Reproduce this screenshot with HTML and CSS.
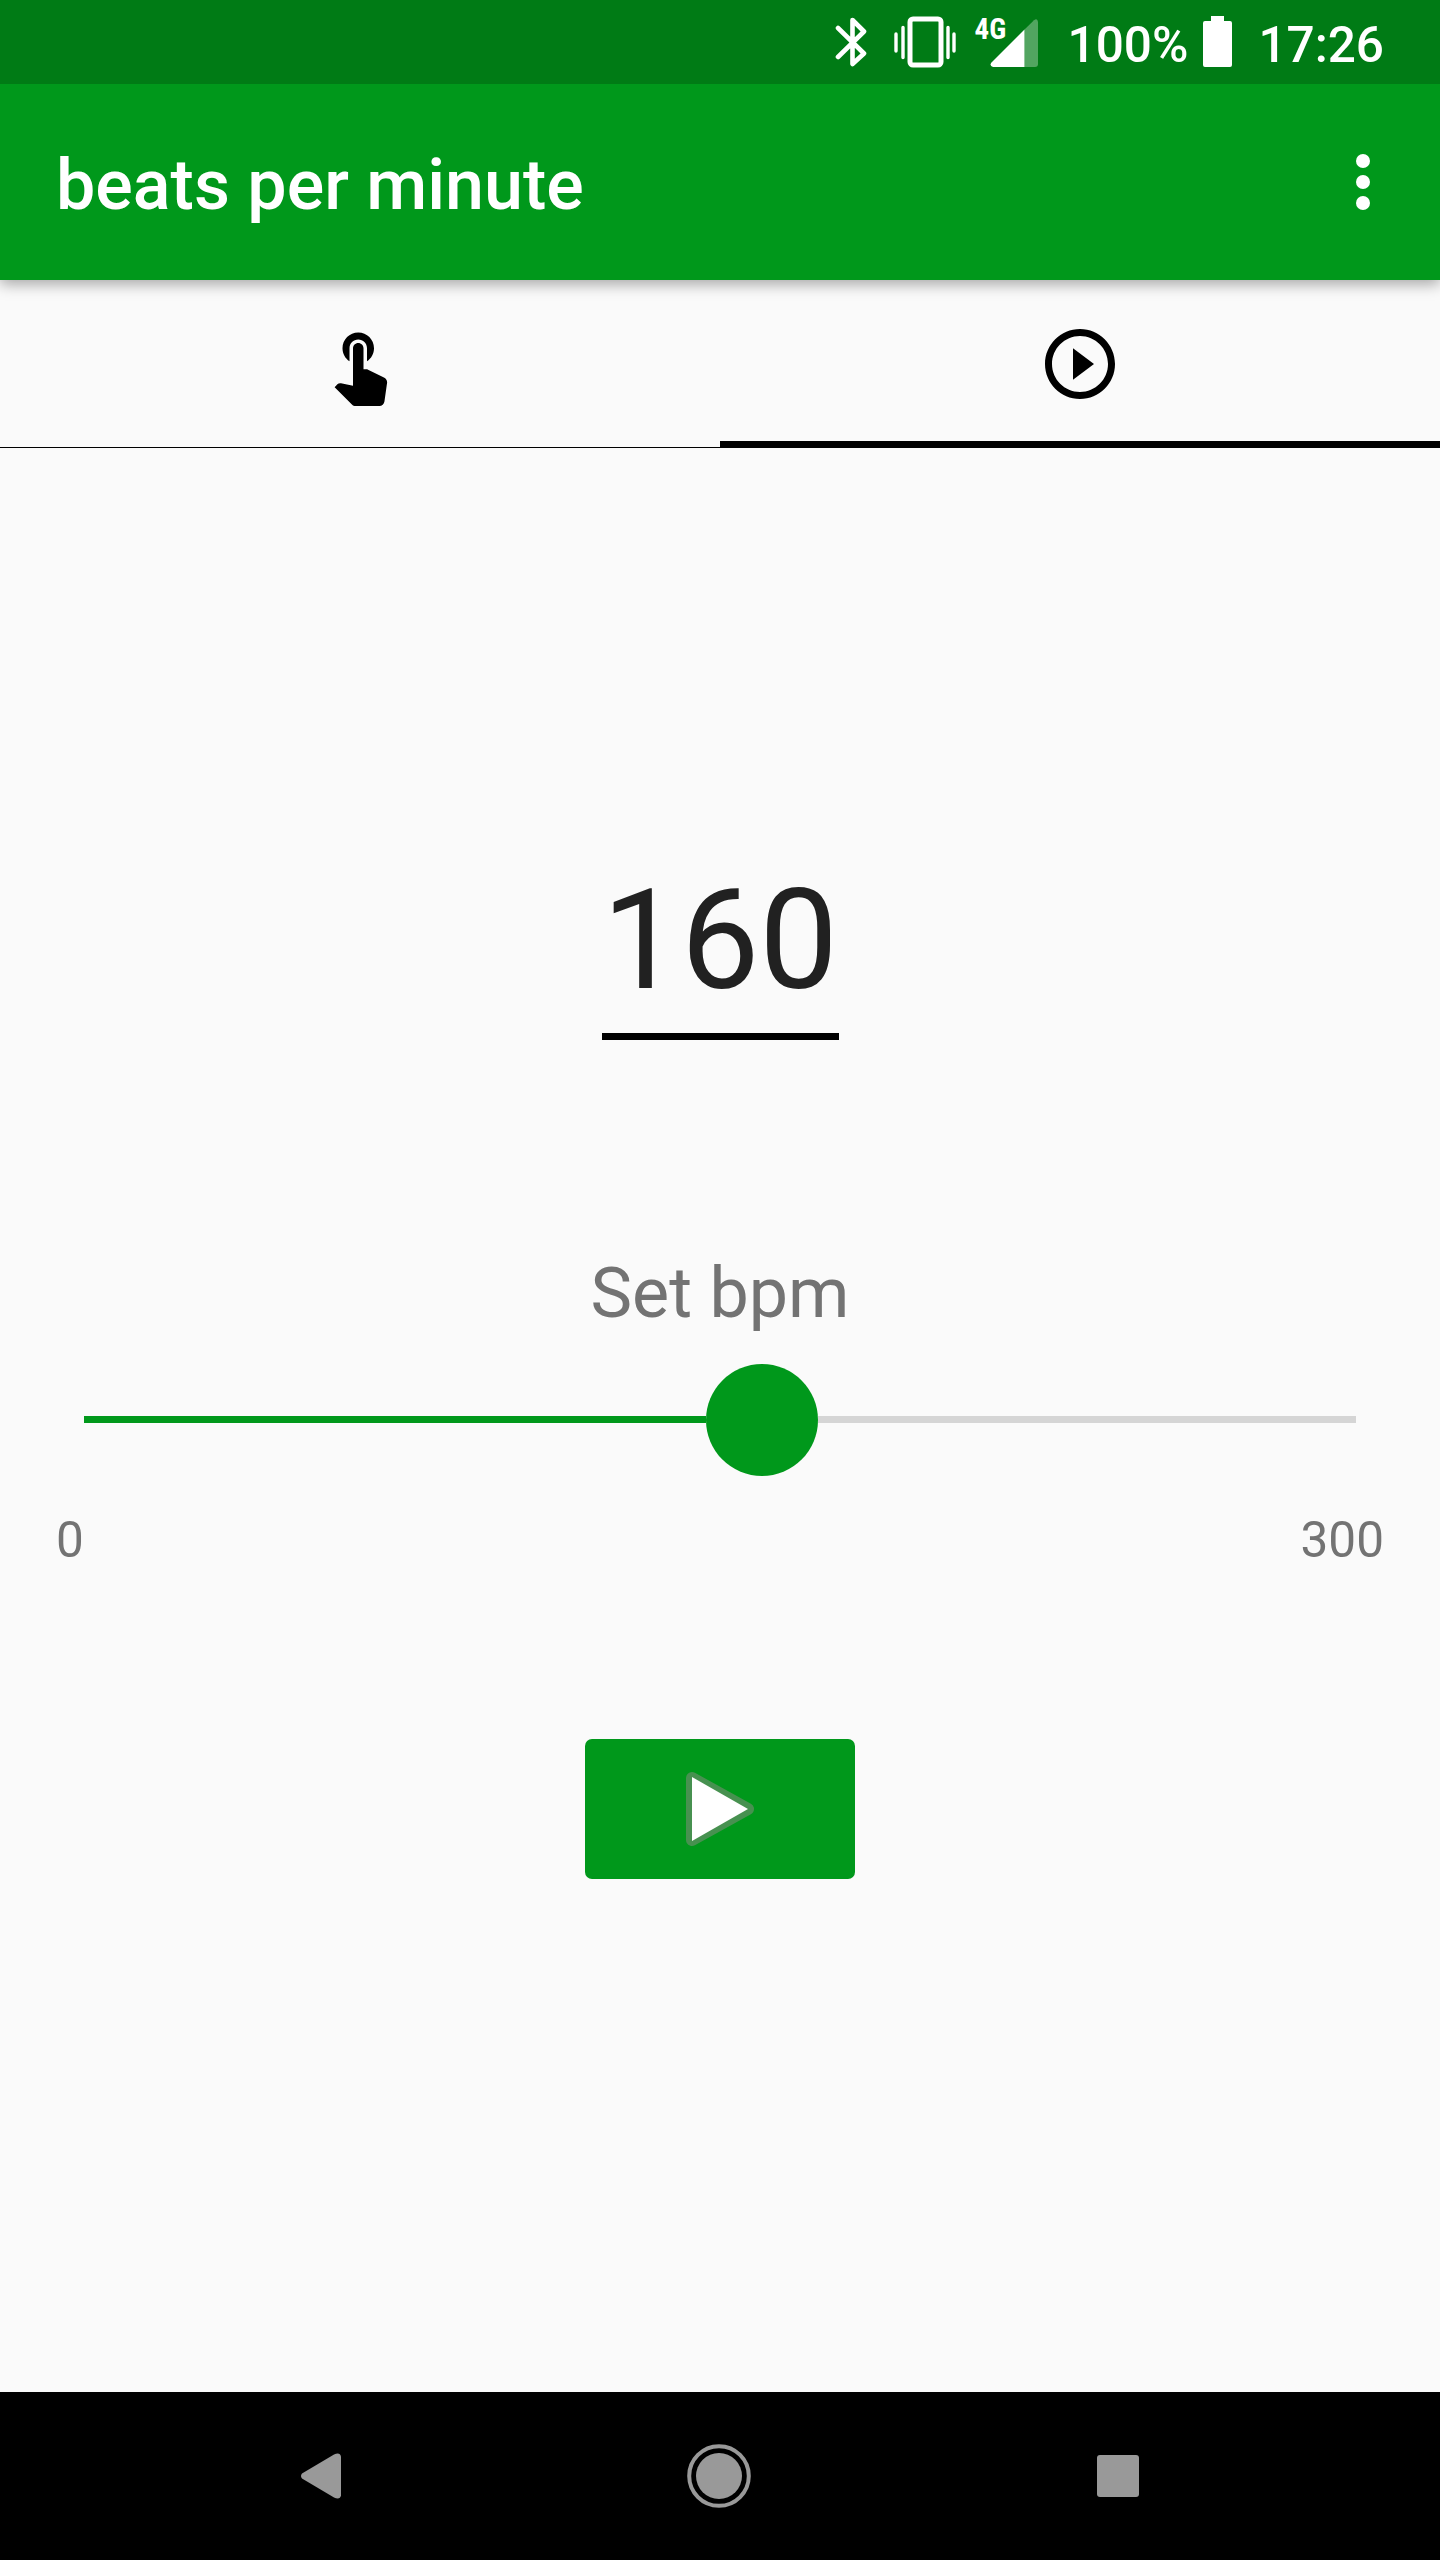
FILE: index.html
```
<!DOCTYPE html>
<html lang="en">
<head>
  <meta charset="UTF-8" />
  <meta name="viewport" content="width=device-width, initial-scale=1.0"/>
  <title>beats per minute</title>
  <link rel="stylesheet" href="styles.css">
</head>
<body>
  <div class="screen">
    <div class="status-bar">
      <svg class="bluetooth" width="32" height="52" viewBox="0 0 32 52" fill="none" stroke="#fff" stroke-width="4.6" stroke-linejoin="round" stroke-linecap="round">
        <path d="M3 12L29 37.500 17.500 48V4L29 15.500 3 41"/>
      </svg>
      <svg class="vibrate" width="62" height="52" viewBox="0 0 62 52">
        <rect x="16" y="3" width="31" height="46" rx="3" fill="none" stroke="#fff" stroke-width="5"/>
        <path d="M9 11.500V41.500M54 11.500V41.500M2 18V35M60 18V35" stroke="#fff" stroke-width="3.400" stroke-linecap="round"/>
      </svg>
      <div class="signal">
        <span class="network">4G</span>
        <svg width="48" height="48" viewBox="0 0 48 48">
          <path d="M34.500 10.500L44 1.200Q47.500 -1.500 48 3V45Q48 48 45 48H34.500Z" fill="#fff" fill-opacity=".32"/>
          <path d="M34.500 10.500V48H3Q-1 47 1.500 43.500Z" fill="#fff"/>
        </svg>
      </div>
      <span class="battery-text">100%</span>
      <svg class="battery" width="29" height="51" viewBox="0 0 29 51" fill="#fff">
        <path d="M8 0H21V5H27Q29 5 29 7V49Q29 51 27 51H2Q0 51 0 49V7Q0 5 2 5H8Z"/>
      </svg>
      <span class="clock">17:26</span>
    </div>

    <div class="app-bar">
      <h1>beats per minute</h1>
      <div class="menu">
        <span class="dot"></span>
        <span class="dot"></span>
        <span class="dot"></span>
      </div>
    </div>

    <div class="tabs">
      <div class="tab">
        <svg class="tap-icon" width="84" height="84" viewBox="0 0 24 24">
          <path d="M9 11.240V7.500C9 6.120 10.120 5 11.500 5S14 6.120 14 7.500v3.740c1.210-.81 2-2.180 2-3.740C16 5.010 13.990 3 11.500 3S7 5.010 7 7.500c0 1.560.79 2.930 2 3.740zm9.840 4.630l-4.540-2.260c-.17-.07-.35-.11-.54-.11H13v-6c0-.83-.67-1.500-1.500-1.500S10 6.670 10 7.500v10.740l-3.430-.72c-.08-.01-.15-.03-.24-.03-.31 0-.59.13-.79.33l-.79.800 4.940 4.940c.27.27.65.44 1.060.44h6.790c.75 0 1.330-.55 1.440-1.280l.75-5.270c.01-.07.02-.14.02-.20 0-.62-.38-1.160-.91-1.380z"/>
        </svg>
      </div>
      <div class="tab active">
        <svg class="play-icon" width="84" height="84" viewBox="0 0 24 24">
          <path d="M10 16.500l6-4.500-6-4.500v9zM12 2C6.480 2 2 6.480 2 12s4.480 10 10 10 10-4.480 10-10S17.520 2 12 2zm0 18c-4.410 0-8-3.590-8-8s3.590-8 8-8 8 3.590 8 8-3.590 8-8 8z"/>
        </svg>
      </div>
    </div>

    <div class="content">
      <div class="bpm-value">160</div>
      <div class="bpm-label">Set bpm</div>
      <div class="slider">
        <div class="track-filled"></div>
        <div class="thumb"></div>
        <div class="track-rest"></div>
      </div>
      <div class="range">
        <span>0</span>
        <span>300</span>
      </div>
      <button class="play-button" type="button" aria-label="Play">
        <svg width="70" height="80" viewBox="0 0 70 80">
          <path d="M7 9L63 40 7 71Z" fill="#fff" stroke="#479150" stroke-width="12" stroke-linejoin="round"/>
          <path d="M7 8L63 40 7 72Z" fill="#fff"/>
        </svg>
      </button>
    </div>

    <div class="nav-bar">
      <svg width="41" height="48" viewBox="0 0 41 48" fill="#999">
        <path d="M2 21.500L34 2.500Q40 0 41 4.500V43.500Q40 48 34 45.500L2 26.500Q0 24 2 21.500Z"/>
      </svg>
      <svg class="home" width="64" height="64" viewBox="0 0 64 64">
        <circle cx="32" cy="32" r="29.800" fill="none" stroke="#999" stroke-width="4"/>
        <circle cx="32" cy="32" r="23" fill="#999"/>
      </svg>
      <div class="recents"></div>
    </div>
  </div>
</body>
</html>
```
FILE: styles.css
```
body {
  margin: 0;
  font-family: Roboto, sans-serif;
  background: #fafafa;
}
.screen {
  display: flex;
  flex-direction: column;
  width: 1440px;
  height: 2560px;
  overflow: hidden;
}
.status-bar {
  display: flex;
  position: relative;
  z-index: 1;
  box-sizing: border-box;
  height: 84px;
  padding: 16px 56px 0 0;
  justify-content: flex-end;
  background: #007b15;
  color: white;
  font-size: 49.5px;
  font-weight: 500;
  line-height: 58px;
}
.vibrate {
  margin-left: 27px;
}
.signal {
  display: flex;
  margin-left: 19px;
}
.signal svg {
  margin: 3px 0 0 -16px;
}
.network {
  width: 31px;
  font-family: "Roboto Condensed", Roboto, sans-serif;
  font-size: 29px;
  font-weight: 700;
  line-height: 26px;
}
.battery-text {
  margin-left: 30px;
}
.battery {
  margin-left: 15px;
}
.clock {
  margin-left: 26px;
}
.app-bar {
  display: flex;
  position: relative;
  box-sizing: border-box;
  height: 196px;
  padding: 0 70px 0 56px;
  justify-content: space-between;
  align-items: center;
  background: #00981b;
  color: white;
  box-shadow: 0 4px 14px rgba(0,0,0,0.35);
}
h1 {
  margin: 6px 0 0;
  font-size: 70px;
  font-weight: 500;
}
.menu {
  display: flex;
  flex-direction: column;
  gap: 7px;
}
.dot {
  width: 14px;
  height: 14px;
  border-radius: 50%;
  background: white;
}
.tabs {
  display: flex;
  height: 168px;
}
.tab {
  display: flex;
  flex: 1;
  box-sizing: border-box;
  padding-top: 42px;
  justify-content: center;
  align-items: flex-start;
  border-bottom: 1px solid black;
}
.tab.active {
  border-bottom: 7px solid black;
}
.content {
  display: flex;
  flex: 1;
  flex-direction: column;
  align-items: center;
}
.bpm-value {
  box-sizing: border-box;
  width: 237px;
  height: 200px;
  margin-top: 392px;
  border-bottom: 7px solid black;
  color: #212121;
  font-size: 140px;
  line-height: 200px;
  text-align: center;
}
.bpm-label {
  margin-top: 212px;
  color: #737373;
  font-size: 70px;
  line-height: 82px;
}
.slider {
  display: flex;
  width: 1272px;
  height: 111px;
  margin-top: 30px;
  align-items: center;
}
.track-filled {
  width: 622px;
  height: 7px;
  background: #00981b;
}
.thumb {
  width: 112px;
  height: 112px;
  border-radius: 50%;
  background: #00981b;
}
.track-rest {
  flex: 1;
  height: 7px;
  background: #d5d5d5;
}
.range {
  display: flex;
  width: 1328px;
  margin-top: 36px;
  justify-content: space-between;
  color: #737373;
  font-size: 49.5px;
  line-height: 58px;
}
.play-button {
  display: flex;
  width: 270px;
  height: 140px;
  margin-top: 170px;
  padding: 0;
  justify-content: center;
  align-items: center;
  border: none;
  border-radius: 7px;
  background: #00981b;
}
.nav-bar {
  display: flex;
  box-sizing: border-box;
  height: 168px;
  padding: 0 301px 0 300px;
  justify-content: space-between;
  align-items: center;
  background: black;
}
.home {
  margin-bottom: 1px;
}
.recents {
  width: 42px;
  height: 42px;
  border-radius: 3px;
  background: #999;
}
```
